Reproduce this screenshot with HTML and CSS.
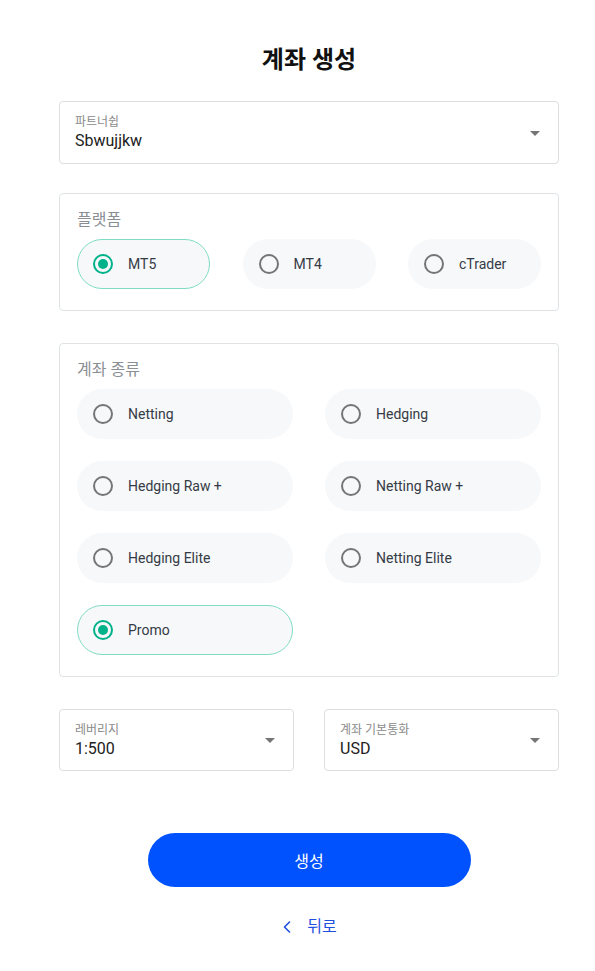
FILE: index.html
```html
<!DOCTYPE html>
<html lang="ko">
<head>
<meta charset="utf-8">
<title>계좌 생성</title>
<link rel="stylesheet" href="styles.css">
</head>
<body>
<main class="page">
  <h1 class="title">계좌 생성</h1>

  <div class="select-field">
    <div class="select-text">
      <span class="select-label">파트너쉽</span>
      <span class="select-value">Sbwujjkw</span>
    </div>
    <span class="caret"></span>
  </div>

  <section class="group group-platform">
    <div class="group-label">플랫폼</div>
    <div class="options options-3">
      <div class="option selected"><span class="radio"></span><span class="option-text">MT5</span></div>
      <div class="option"><span class="radio"></span><span class="option-text">MT4</span></div>
      <div class="option"><span class="radio"></span><span class="option-text">cTrader</span></div>
    </div>
  </section>

  <section class="group group-type">
    <div class="group-label">계좌 종류</div>
    <div class="options options-2">
      <div class="option"><span class="radio"></span><span class="option-text">Netting</span></div>
      <div class="option"><span class="radio"></span><span class="option-text">Hedging</span></div>
      <div class="option"><span class="radio"></span><span class="option-text">Hedging Raw +</span></div>
      <div class="option"><span class="radio"></span><span class="option-text">Netting Raw +</span></div>
      <div class="option"><span class="radio"></span><span class="option-text">Hedging Elite</span></div>
      <div class="option"><span class="radio"></span><span class="option-text">Netting Elite</span></div>
      <div class="option selected"><span class="radio"></span><span class="option-text">Promo</span></div>
    </div>
  </section>

  <div class="row-fields">
    <div class="select-field small">
      <div class="select-text">
        <span class="select-label">레버리지</span>
        <span class="select-value">1:500</span>
      </div>
      <span class="caret"></span>
    </div>
    <div class="select-field small">
      <div class="select-text">
        <span class="select-label">계좌 기본통화</span>
        <span class="select-value">USD</span>
      </div>
      <span class="caret"></span>
    </div>
  </div>

  <div class="actions">
    <button class="btn-primary" type="button">생성</button>
    <a class="back-link" href="#">
      <svg class="back-icon" width="8" height="12" viewBox="0 0 8 12" aria-hidden="true">
        <path d="M6.5 1 L1.5 6 L6.5 11" fill="none" stroke="currentColor" stroke-width="1.6" stroke-linecap="round" stroke-linejoin="round"/>
      </svg>
      <span>뒤로</span>
    </a>
  </div>
</main>
</body>
</html>
```

FILE: styles.css
```css
* {
  box-sizing: border-box;
}

html, body {
  margin: 0;
  padding: 0;
  background: #ffffff;
}

body {
  font-family: Roboto, "Noto Sans CJK KR", sans-serif;
  color: #212121;
}

.page {
  width: 500px;
  margin: 0 36px 0 59px;
  padding-top: 44px;
  display: flex;
  flex-direction: column;
}

.title {
  margin: 0 0 25px;
  font-size: 24px;
  line-height: 32px;
  font-weight: 700;
  text-align: center;
  color: #111111;
}

/* dropdown-style fields */
.select-field {
  height: 63px;
  border: 1px solid #dedede;
  border-radius: 4px;
  padding: 0 18px 0 15px;
  display: flex;
  align-items: center;
  justify-content: space-between;
}

.select-text {
  display: flex;
  flex-direction: column;
  padding-top: 2px;
}

.select-label {
  font-size: 12px;
  line-height: 15px;
  color: #8a8a8a;
}

.select-value {
  font-size: 16px;
  line-height: 22px;
  color: #212121;
}

.caret {
  width: 0;
  height: 0;
  border-left: 5px solid transparent;
  border-right: 5px solid transparent;
  border-top: 5px solid #757575;
  margin-top: 1px;
}

/* radio groups */
.group {
  border: 1px solid #dfe3e6;
  border-radius: 4px;
  padding: 14px 17px 21px;
}

.group-platform {
  margin-top: 29px;
}

.group-type {
  margin-top: 32px;
}

.group-label {
  font-size: 16px;
  line-height: 24px;
  color: #8a8f94;
  margin-bottom: 7px;
}

.options {
  display: grid;
  column-gap: 32px;
  row-gap: 22px;
}

.options-3 {
  grid-template-columns: repeat(3, 133px);
  justify-content: space-between;
}

.options-2 {
  grid-template-columns: repeat(2, 216px);
  justify-content: space-between;
}

.option {
  height: 50px;
  border-radius: 25px;
  background: #f7f8fa;
  border: 1px solid transparent;
  display: flex;
  align-items: center;
  padding-left: 15px;
}

.option.selected {
  border-color: #7fdcc4;
}

.radio {
  width: 20px;
  height: 20px;
  border-radius: 50%;
  border: 2px solid #757575;
  flex: none;
  position: relative;
}

.option.selected .radio {
  border-color: #00b28a;
}

.option.selected .radio::after {
  content: "";
  position: absolute;
  left: 3px;
  top: 3px;
  width: 10px;
  height: 10px;
  border-radius: 50%;
  background: #00b28a;
}

.option-text {
  margin-left: 15px;
  font-size: 14px;
  line-height: 20px;
  color: #353b45;
}

/* leverage / currency row */
.row-fields {
  margin-top: 32px;
  display: grid;
  grid-template-columns: 235px 235px;
  justify-content: space-between;
}

.row-fields .select-field {
  height: 62px;
}

/* actions */
.actions {
  margin-top: 62px;
  display: flex;
  flex-direction: column;
  align-items: center;
}

.btn-primary {
  width: 323px;
  height: 54px;
  border: none;
  border-radius: 27px;
  background: #0052ff;
  color: #ffffff;
  font-family: Roboto, "Noto Sans CJK KR", sans-serif;
  font-size: 16px;
  cursor: pointer;
}

.back-link {
  margin-top: 29px;
  display: flex;
  align-items: center;
  gap: 16px;
  font-size: 16px;
  line-height: 22px;
  color: #1f4fe0;
  text-decoration: none;
  margin-left: 2px;
}

.back-icon {
  display: block;
}
```
